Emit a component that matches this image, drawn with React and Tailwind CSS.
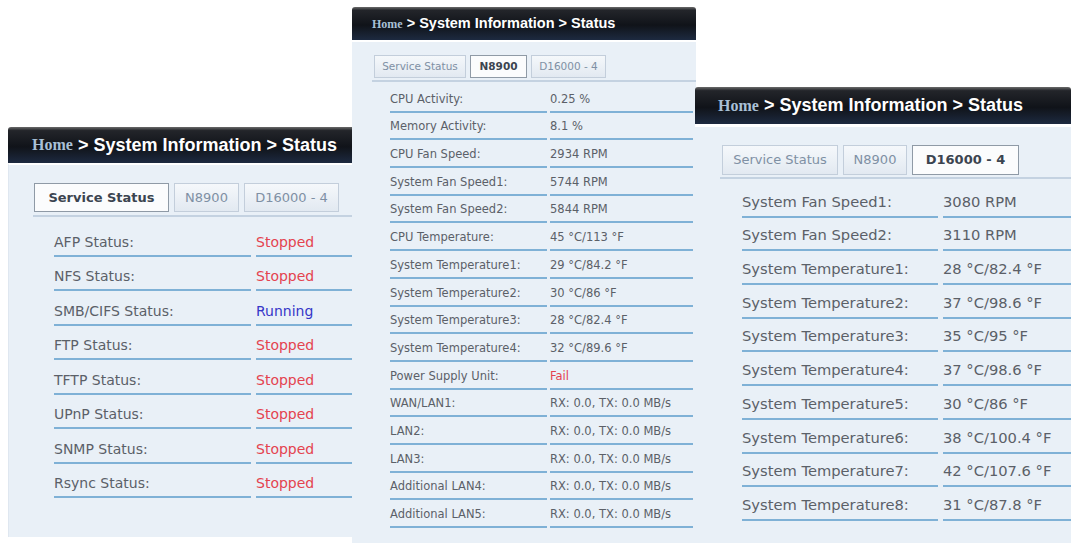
const services = [
  ['AFP Status:', 'Stopped'],
  ['NFS Status:', 'Stopped'],
  ['SMB/CIFS Status:', 'Running'],
  ['FTP Status:', 'Stopped'],
  ['TFTP Status:', 'Stopped'],
  ['UPnP Status:', 'Stopped'],
  ['SNMP Status:', 'Stopped'],
  ['Rsync Status:', 'Stopped']
]

const n8900 = [
  ['CPU Activity:', '0.25 %'],
  ['Memory Activity:', '8.1 %'],
  ['CPU Fan Speed:', '2934 RPM'],
  ['System Fan Speed1:', '5744 RPM'],
  ['System Fan Speed2:', '5844 RPM'],
  ['CPU Temperature:', '45 °C/113 °F'],
  ['System Temperature1:', '29 °C/84.2 °F'],
  ['System Temperature2:', '30 °C/86 °F'],
  ['System Temperature3:', '28 °C/82.4 °F'],
  ['System Temperature4:', '32 °C/89.6 °F'],
  ['Power Supply Unit:', 'Fail'],
  ['WAN/LAN1:', 'RX: 0.0, TX: 0.0 MB/s'],
  ['LAN2:', 'RX: 0.0, TX: 0.0 MB/s'],
  ['LAN3:', 'RX: 0.0, TX: 0.0 MB/s'],
  ['Additional LAN4:', 'RX: 0.0, TX: 0.0 MB/s'],
  ['Additional LAN5:', 'RX: 0.0, TX: 0.0 MB/s']
]

const d16000 = [
  ['System Fan Speed1:', '3080 RPM'],
  ['System Fan Speed2:', '3110 RPM'],
  ['System Temperature1:', '28 °C/82.4 °F'],
  ['System Temperature2:', '37 °C/98.6 °F'],
  ['System Temperature3:', '35 °C/95 °F'],
  ['System Temperature4:', '37 °C/98.6 °F'],
  ['System Temperature5:', '30 °C/86 °F'],
  ['System Temperature6:', '38 °C/100.4 °F'],
  ['System Temperature7:', '42 °C/107.6 °F'],
  ['System Temperature8:', '31 °C/87.8 °F']
]

// status words get their own colour, everything else stays gray
const valueColor = (value) => {
  if (value === 'Stopped' || value === 'Fail') return 'text-[#e4434f]'
  if (value === 'Running') return 'text-[#3636c8]'
  return 'text-[#5b6068]'
}

const headerBg =
  'bg-[linear-gradient(to_bottom,#6a6a6a_0%,#23252a_10%,#101319_55%,#1d2a40_100%)]'

const Header = ({ className, homeClass, restClass }) => (
  <div className={`flex shrink-0 items-center rounded-t-[3px] ${headerBg} ${className}`}>
    <span className={`font-['Liberation_Serif',serif] font-bold text-[#a9c0d6] ${homeClass}`}>Home</span>
    <span className={`whitespace-pre font-['Liberation_Sans',sans-serif] font-bold text-white ${restClass}`}> &gt; System Information &gt; Status</span>
  </div>
)

const Tabs = ({ active, className, tabClass, widths }) => {
  const names = ['Service Status', 'N8900', 'D16000 - 4']
  return (
    <div className={`flex items-start border-b-2 border-[#c4d2e1] ${className}`}>
      {names.map((name, i) => (
        <div
          key={name}
          className={`flex items-center justify-center border ${tabClass} ${widths[i]} ${
            i === active
              ? 'border-[#8f9aa6] bg-[#fbfcfd] font-bold text-[#3b4450]'
              : 'border-[#c3cedb] bg-[linear-gradient(to_bottom,#f5f8fb,#e2e9f1)] text-[#7f90a4]'
          }`}
        >
          {name}
        </div>
      ))}
    </div>
  )
}

const Rows = ({ rows, gridClass, cellClass }) => (
  <div className={`grid ${gridClass}`}>
    {rows.map(([label, value]) => [
      <div key={label} className={`flex items-end border-b-2 border-[#7fb1d6] text-[#5b6068] ${cellClass}`}>
        {label}
      </div>,
      <div key={label + 'v'} className={`flex items-end whitespace-nowrap border-b-2 border-[#7fb1d6] ${cellClass} ${valueColor(value)}`}>
        {value}
      </div>
    ])}
  </div>
)

const App = () => {
  return (
    <div className="relative h-[543px] w-[1071px] overflow-hidden bg-white font-['DejaVu_Sans',sans-serif]">
      {/* left window: service status */}
      <div className="absolute left-[8px] top-[127px] flex h-[410px] w-[360px] flex-col">
        <Header className="h-[36px] pl-[24px]" homeClass="text-[16px]" restClass="text-[18px]" />
        <div className="flex-1 border-l border-t-2 border-[#dfe7f0] border-t-white bg-[#e9f0f7] pt-[18px]">
          <Tabs
            active={0}
            className="ml-[24px] gap-[5px] pb-[3px] pl-[1px]"
            tabClass="h-[29px] text-[13px]"
            widths={['w-[135px]', 'w-[65px]', 'w-[95px]']}
          />
          <div className="ml-[45px] mt-[5px]">
            <Rows
              rows={services}
              gridClass="grid-cols-[197px_1fr] gap-x-[5px]"
              cellClass="h-[34.5px] pb-[4px] text-[14px] leading-[18px]"
            />
          </div>
        </div>
      </div>

      {/* middle window: N8900 */}
      <div className="absolute left-[352px] top-[7px] flex h-[536px] w-[344px] flex-col">
        <Header className="h-[33px] pl-[20px]" homeClass="text-[12px]" restClass="text-[14.5px]" />
        <div className="flex-1 border-t-2 border-white bg-[#e9f0f7] pt-[13px]">
          <Tabs
            active={1}
            className="ml-[20px] gap-[4px] pb-[2px] pl-[2px]"
            tabClass="h-[23px] text-[10.5px]"
            widths={['w-[92px]', 'w-[57px]', 'w-[75px]']}
          />
          <div className="ml-[38px] mr-[3px] mt-[3px]">
            <Rows
              rows={n8900}
              gridClass="grid-cols-[157px_1fr] gap-x-[3px]"
              cellClass="h-[27.7px] pb-[4px] text-[11.5px] leading-[15px]"
            />
          </div>
        </div>
      </div>

      {/* right window: D16000 - 4 */}
      <div className="absolute left-[695px] top-[87px] flex h-[456px] w-[376px] flex-col">
        <Header className="h-[37px] pl-[23px]" homeClass="text-[16px]" restClass="text-[18px]" />
        <div className="flex-1 border-t-[3px] border-white bg-[#e9f0f7] pt-[18px]">
          <Tabs
            active={2}
            className="ml-[25px] gap-[5px] pb-[2px] pl-[2px]"
            tabClass="h-[30px] text-[13px]"
            widths={['w-[116px]', 'w-[64px]', 'w-[107px]']}
          />
          <div className="ml-[47px] mt-[5px]">
            <Rows
              rows={d16000}
              gridClass="grid-cols-[196px_1fr] gap-x-[5px]"
              cellClass="h-[33.7px] pb-[5px] text-[14.7px] leading-[18px]"
            />
          </div>
        </div>
      </div>
    </div>
  )
}

export default App
